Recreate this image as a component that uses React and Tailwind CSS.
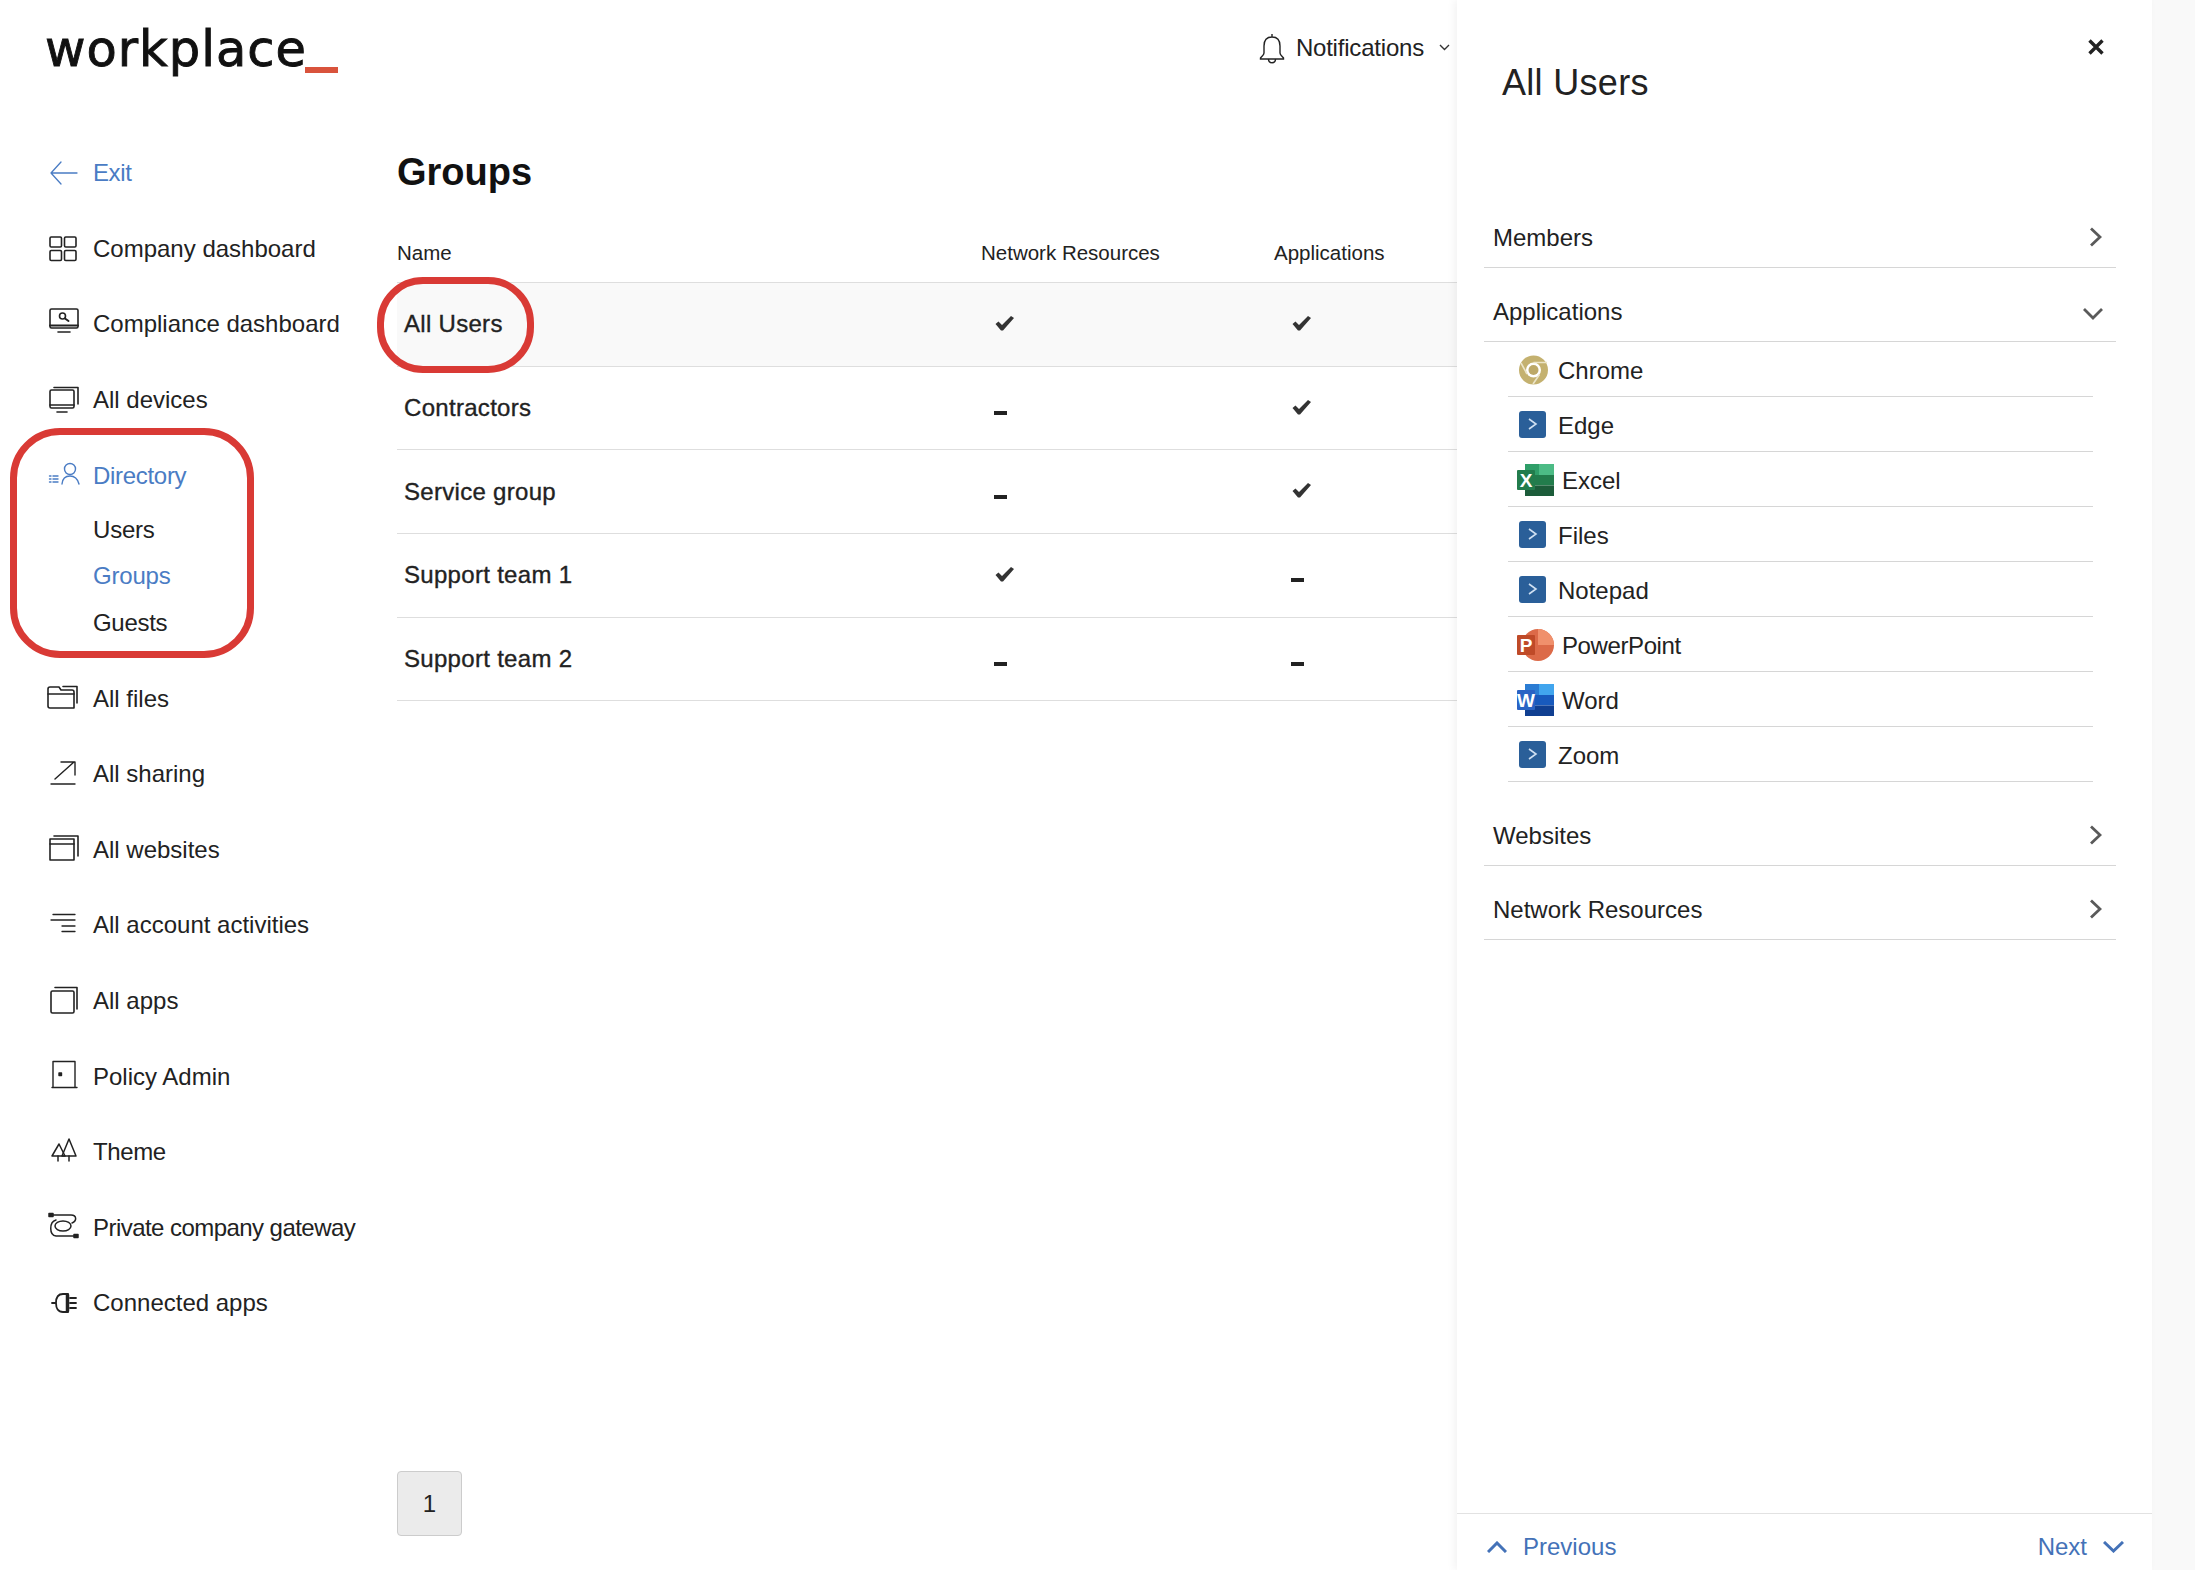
import React from "react";

const Ico = ({ children, sw = 1.6 }) => (
  <svg width="32" height="32" viewBox="0 0 32 32" fill="none" stroke="currentColor" strokeWidth={sw} strokeLinecap="round" strokeLinejoin="round" className="shrink-0 overflow-visible">
    {children}
  </svg>
);

const icons = {
  exit: (
    <Ico sw={1.3}>
      <path d="M4 16H30M14 5L4 16L14 27" />
    </Ico>
  ),
  company: (
    <Ico>
      <rect x="3" y="4" width="11.5" height="10" rx="1.2" />
      <rect x="17.5" y="4" width="11.5" height="10" rx="1.2" />
      <rect x="3" y="17.5" width="11.5" height="10" rx="1.2" />
      <rect x="17.5" y="17.5" width="11.5" height="10" rx="1.2" />
    </Ico>
  ),
  compliance: (
    <Ico>
      <rect x="3" y="1" width="28" height="19" rx="1.5" />
      <path d="M3 17.5H31" strokeWidth="2" />
      <circle cx="15.5" cy="8" r="3" />
      <path d="M18 10.5L21.5 13" strokeWidth="2" />
      <path d="M11 24H23" />
    </Ico>
  ),
  devices: (
    <Ico>
      <rect x="3" y="6" width="24" height="18" rx="1.5" />
      <path d="M3 21H27" />
      <path d="M7 3.5H31V20" />
      <path d="M10 28H20" />
    </Ico>
  ),
  directory: (
    <Ico sw={1.4}>
      <circle cx="23" cy="9" r="5.5" />
      <path d="M15 24C15.5 18.5 19 16 23 16S30.5 18.5 32 24" />
      <path d="M2.5 16H4M6 16H11M2.5 19H4M6 19H11M2.5 22H4M6 22H11" />
    </Ico>
  ),
  files: (
    <Ico>
      <path d="M1 10V6Q1 4 3 4H12L14 7H25Q27 7 27 9V25H3Q1 25 1 23Z" />
      <path d="M1 11H27" />
      <path d="M16 3.5H30V20" />
    </Ico>
  ),
  sharing: (
    <Ico sw={1.4}>
      <path d="M8 21L27 4M14 4H28V17" />
      <path d="M4 26H28" />
    </Ico>
  ),
  websites: (
    <Ico>
      <rect x="3" y="5" width="24" height="21" />
      <path d="M3 10H27" />
      <path d="M7 2H31V22" />
    </Ico>
  ),
  activities: (
    <Ico sw={1.3}>
      <path d="M6 5.5H28M4 11H28M15 17H28M15 22.5H28" />
    </Ico>
  ),
  apps: (
    <Ico>
      <rect x="4" y="6" width="23" height="22" rx="1.5" />
      <path d="M8 2.5H30V24" />
    </Ico>
  ),
  policy: (
    <Ico sw={1.4}>
      <path d="M6 26V0.5H28V26M5 26.5H30" />
      <rect x="12" y="12" width="2.5" height="2.5" fill="currentColor" />
    </Ico>
  ),
  theme: (
    <Ico sw={1.5}>
      <path d="M22 3L29 20H15L22 3Z" />
      <path d="M12 8L18 20H5L12 8Z" />
      <path d="M11 20V25M22 20V25" />
    </Ico>
  ),
  gateway: (
    <Ico sw={1.5}>
      <path d="M6 3H24C30 3 30 9 25 11" />
      <path d="M9 8C2 10 2 23 9 24H28" />
      <ellipse cx="16" cy="14" rx="8" ry="5" />
      <rect x="2" y="1.5" width="4" height="3" fill="currentColor" />
      <rect x="27" y="22.5" width="4" height="3" fill="currentColor" />
    </Ico>
  ),
  connected: (
    <Ico sw={1.8}>
      <path d="M5 16H9M21 7H16C11 7 9 11 9 16S11 25 16 25H21Z" />
      <path d="M20.5 8V24" strokeWidth="3.5" />
      <path d="M23 11H29M23 16H29M23 21H29" />
    </Ico>
  ),
};

const upperNav = [
  { key: "company", label: "Company dashboard" },
  { key: "compliance", label: "Compliance dashboard" },
  { key: "devices", label: "All devices" },
];

const lowerNav = [
  { key: "files", label: "All files" },
  { key: "sharing", label: "All sharing" },
  { key: "websites", label: "All websites" },
  { key: "activities", label: "All account activities" },
  { key: "apps", label: "All apps" },
  { key: "policy", label: "Policy Admin" },
  { key: "theme", label: "Theme", track: "tracking-[-0.4px]" },
  { key: "gateway", label: "Private company gateway", track: "tracking-[-0.55px]" },
  { key: "connected", label: "Connected apps" },
];

const NavRow = ({ item, active }) => (
  <a className={`flex h-[75.6px] items-center gap-[14px] whitespace-nowrap ${active ? "text-[#4a7cc4]" : "text-[#222222]"}`}>
    {icons[item.key]}
    <span className={item.track}>{item.label}</span>
  </a>
);

const groups = [
  { name: "All Users", network: true, apps: true, selected: true },
  { name: "Contractors", network: false, apps: true },
  { name: "Service group", network: false, apps: true },
  { name: "Support team 1", network: true, apps: false },
  { name: "Support team 2", network: false, apps: false },
];

const Flag = ({ on, col }) => {
  const checkLeft = col === "apps" ? "ml-[18px]" : "ml-[14px]";
  const dashLeft = col === "apps" ? "ml-[17px]" : "ml-[13px]";
  return on ? (
    <svg width="20" height="15" viewBox="0 0 20 15" className={`${checkLeft} -mt-[2px] block`}>
      <path d="M0.5 8L3.5 5.5L7 9L16 0L19 2L8 14.5H6Z" fill="#333333" />
    </svg>
  ) : (
    <div className={`${dashLeft} mt-[10px] h-[4px] w-[13px] bg-[#222222]`} />
  );
};

const Chevron = ({ dir, className }) => {
  const paths = {
    right: { w: 13, h: 20, d: "M2 1.5L11 10L2 18.5" },
    down: { w: 22, h: 13, d: "M2 2L11 11L20 2" },
  };
  const p = paths[dir];
  return (
    <svg width={p.w} height={p.h} viewBox={`0 0 ${p.w} ${p.h}`} fill="none" stroke="#5a5a5a" strokeWidth="2.8" className={className}>
      <path d={p.d} />
    </svg>
  );
};

const SectionRow = ({ label, open }) => (
  <div className="ml-[27px] mr-[36px] flex h-[74px] items-center justify-between border-b border-[#d6d6d6] pl-[9px] pt-[15px]">
    <span>{label}</span>
    {open ? <Chevron dir="down" className="mr-[12px] mt-[2px]" /> : <Chevron dir="right" className="mr-[14px] -mt-[3px]" />}
  </div>
);

const Tile = () => (
  <svg width="27" height="27" viewBox="0 0 27 27" className="mr-[12px] shrink-0">
    <rect width="27" height="27" rx="3" fill="#2a5f99" />
    <path d="M10 8L17 13L10 18" fill="none" stroke="#cfe0f2" strokeWidth="1.6" />
  </svg>
);

const ChromeIcon = () => (
  <svg width="29" height="30" viewBox="0 0 29 30" className="mr-[10px] shrink-0">
    <circle cx="14.5" cy="15" r="14.5" fill="#c4b16f" />
    <circle cx="14.5" cy="15" r="7.5" fill="#ffffff" />
    <circle cx="14.5" cy="15" r="5" fill="#bda968" />
    <path d="M14.5 7.5H28M8 19L2 8M20.5 19.5L14 29" stroke="#ece5c8" strokeWidth="1.6" />
  </svg>
);

const OfficeIcon = ({ letter, c1, c2, c3, c4, front, round }) => (
  <svg width="37" height="32" viewBox="0 0 37 32" className="-ml-[2px] mr-[8px] shrink-0">
    {round ? (
      <>
        <circle cx="21" cy="16" r="16" fill={c3} />
        <path d="M21 0A16 16 0 0 1 37 16H21Z" fill={c2} />
      </>
    ) : (
      <>
        <rect x="8" width="29" height="11" fill={c1} />
        <rect x="8" y="11" width="29" height="10.5" fill={c2} />
        <rect x="8" y="21.5" width="29" height="10.5" fill={c3} />
      </>
    )}
    {!round && <rect x="22" width="15" height="11" fill={c4} />}
    <rect y="6" width="18" height="20" rx="1" fill={front} />
    <text x="9" y="22.5" textAnchor="middle" fill="#ffffff" fontSize="19" fontWeight="700" fontFamily="Liberation Sans, sans-serif">
      {letter}
    </text>
  </svg>
);

const appList = [
  { name: "Chrome", icon: <ChromeIcon /> },
  { name: "Edge", icon: <Tile /> },
  { name: "Excel", icon: <OfficeIcon letter="X" c1="#2f9e68" c2="#227c4c" c3="#1c5c3a" c4="#4cbb85" front="#227c4c" /> },
  { name: "Files", icon: <Tile /> },
  { name: "Notepad", icon: <Tile /> },
  { name: "PowerPoint", icon: <OfficeIcon letter="P" round c2="#f0906c" c3="#dc6a48" front="#bf4a28" />, track: "tracking-[-0.4px]" },
  { name: "Word", icon: <OfficeIcon letter="W" c1="#2b7cd3" c2="#185abd" c3="#103f91" c4="#41a5ee" front="#2a63c4" /> },
  { name: "Zoom", icon: <Tile /> },
];

export default function App() {
  return (
    <div className="relative flex h-[1570px] w-full overflow-hidden bg-white font-['Liberation_Sans',Arial,sans-serif] text-[24px] text-[#222222]">
      {/* sidebar */}
      <aside className="w-[397px] shrink-0 pl-[47px]">
        <div className="-ml-[2px] flex h-[135.4px] items-start pt-[14px] font-['DejaVu_Sans',sans-serif] text-[49.5px] leading-[70px] tracking-[1px] text-[#111111] [-webkit-text-stroke:0.9px_#111111]">
          workplace
          <span className="-ml-[2px] mt-[53px] block h-[6px] w-[33px] bg-[#d9533c]" />
        </div>
        <nav>
          <NavRow item={{ key: "exit", label: "Exit", track: "tracking-[-0.4px]" }} active />
          {upperNav.map((item) => (
            <NavRow key={item.key} item={item} />
          ))}
          <NavRow item={{ key: "directory", label: "Directory", track: "tracking-[-0.3px]" }} active />
          <div className="mb-[15px] mt-[-7px] pl-[46px]">
            <div className="flex h-[46.5px] items-center tracking-[-0.2px]">Users</div>
            <div className="flex h-[46.5px] items-center text-[#4a7cc4] tracking-[-0.2px]">Groups</div>
            <div className="flex h-[46.5px] items-center tracking-[-0.3px]">Guests</div>
          </div>
          {lowerNav.map((item) => (
            <NavRow key={item.key} item={item} />
          ))}
        </nav>
      </aside>

      {/* main */}
      <main className="flex w-[1060px] shrink-0 flex-col">
        <div className="flex h-[96px] items-center justify-end pr-[7px]">
          <svg width="26" height="31" viewBox="0 0 26 31" fill="none" stroke="#222222" strokeWidth="1.4" className="mr-[11px]">
            <path d="M13 1V4M13 4C7.5 4 5 8 5 13V20C5 22 3 23 1.5 25V26H24.5V25C23 23 21 22 21 20V13C21 8 18.5 4 13 4Z" />
            <path d="M9.5 26C9.5 31 16.5 31 16.5 26" />
          </svg>
          <span className="tracking-[-0.2px]">Notifications</span>
          <svg width="11" height="7" viewBox="0 0 11 7" fill="none" stroke="#333333" strokeWidth="1.4" className="ml-[15px] -mt-[2px]">
            <path d="M1 1L5.5 5.5L10 1" />
          </svg>
        </div>
        <h1 className="mt-[51.5px] text-[38px] font-bold leading-[48px] text-[#111111]">Groups</h1>
        <div className="mt-[29.5px] grid h-[58px] grid-cols-[584px_293px_1fr] items-center border-b border-[#dedede] text-[20.5px]">
          <div>Name</div>
          <div>Network Resources</div>
          <div>Applications</div>
        </div>
        {groups.map((g) => (
          <div
            key={g.name}
            className={`grid h-[83.7px] grid-cols-[584px_293px_1fr] items-center border-b border-[#dedede] ${g.selected ? "bg-[#f9f9f9]" : ""}`}
          >
            <div className="pl-[7px] tracking-[0.3px] [-webkit-text-stroke:0.35px_#222222]">{g.name}</div>
            <div><Flag on={g.network} col="network" /></div>
            <div><Flag on={g.apps} col="apps" /></div>
          </div>
        ))}
        <div className="mb-[34px] mt-auto flex h-[65px] w-[65px] items-center justify-center rounded-[4px] border border-[#cccccc] bg-[#ebebeb]">
          1
        </div>
      </main>

      {/* details panel */}
      <section className="z-10 flex w-[695px] shrink-0 flex-col bg-white shadow-[-3px_0_8px_rgba(0,0,0,0.05)]">
        <div className="flex h-[194px] items-start justify-between pl-[45px] pr-[48px]">
          <h2 className="mt-[61px] text-[36px] leading-[44px] tracking-[0.3px]">All Users</h2>
          <svg width="16" height="16" viewBox="0 0 16 16" stroke="#222222" strokeWidth="3.4" className="mt-[39px]">
            <path d="M1.5 1.5L14.5 14.5M14.5 1.5L1.5 14.5" />
          </svg>
        </div>
        <SectionRow label="Members" />
        <SectionRow label="Applications" open />
        <div className="mb-[10px] ml-[51px] mr-[59px]">
          {appList.map((app) => (
            <div key={app.name} className="flex h-[55px] items-center border-b border-[#d6d6d6] pl-[11px] pt-[3px]">
              <span className="-mt-[2px] flex items-center">{app.icon}</span>
              <span className={app.track}>{app.name}</span>
            </div>
          ))}
        </div>
        <SectionRow label="Websites" />
        <SectionRow label="Network Resources" />
        <div className="mt-auto flex h-[57px] items-center justify-between border-t border-[#e2e2e2] pl-[30px] pr-[28px] pt-[10px] text-[#4472b8]">
          <div className="flex items-center gap-[16px]">
            <svg width="20" height="12" viewBox="0 0 20 12" fill="none" stroke="#4472b8" strokeWidth="3">
              <path d="M1 11L10 2L19 11" />
            </svg>
            <span>Previous</span>
          </div>
          <div className="flex items-center gap-[16px]">
            <span>Next</span>
            <svg width="21" height="12" viewBox="0 0 21 12" fill="none" stroke="#4472b8" strokeWidth="3">
              <path d="M1 1L10.5 10L20 1" />
            </svg>
          </div>
        </div>
      </section>

      <div className="flex-1 bg-[#f9f9f9]" />

      {/* red annotations drawn over the screenshot */}
      <div className="absolute left-[10px] top-[428px] z-20 h-[230px] w-[244px] rounded-[50px] border-[7px] border-[#d93a35]" />
      <div className="absolute left-[377px] top-[277px] z-20 h-[96px] w-[157px] rounded-[46px] border-[7px] border-[#d93a35]" />
    </div>
  );
}
